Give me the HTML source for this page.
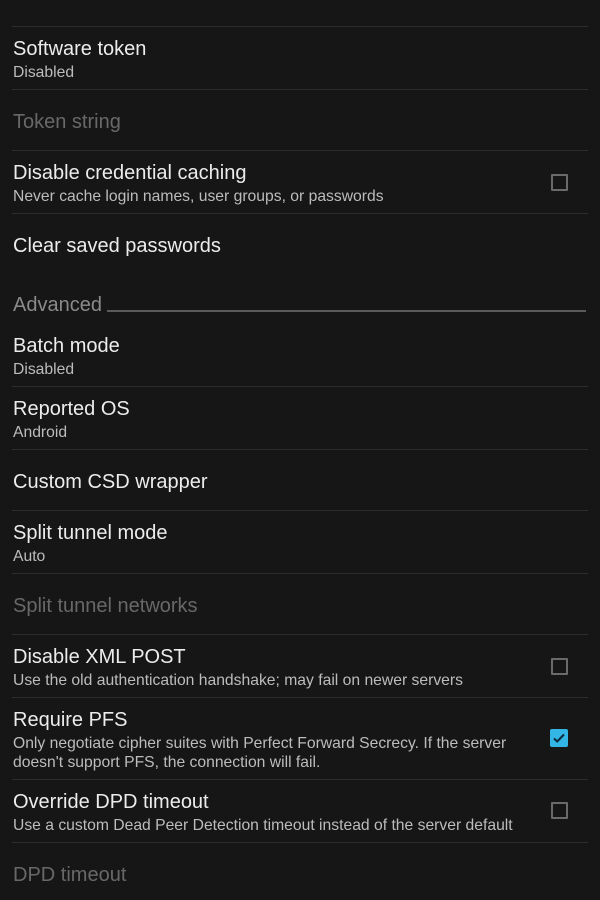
<!DOCTYPE html>
<html><head><meta charset="utf-8"><style>
body{margin:0;width:600px;height:900px;background:#161616;position:relative;overflow:hidden;font-family:"Liberation Sans",sans-serif}
.d{position:absolute;left:12px;width:576px;height:1px;background:#2c2c2c}
.t{position:absolute;left:13px;font-size:20px;color:#ececec;line-height:1;white-space:nowrap}
.s{position:absolute;left:13px;font-size:15.7px;color:#bcbcbc;line-height:1;white-space:nowrap}
.g{color:#686868}
.cb{position:absolute;left:551px;width:13px;height:13px;border:2px solid #6a6a6a;border-radius:1px}
.ck{position:absolute;left:550px;width:18px;height:18px;background:#33b5e5;border-radius:2px}
</style></head><body>
<div class="d" style="top:26px"></div>
<div class="t" style="top:39px">Software token</div>
<div class="s" style="top:65px">Disabled</div>
<div class="d" style="top:89px"></div>
<div class="t g" style="top:112px">Token string</div>
<div class="d" style="top:150px"></div>
<div class="t" style="top:163px">Disable credential caching</div>
<div class="s" style="top:189px">Never cache login names, user groups, or passwords</div>
<div class="cb" style="top:174px"></div>
<div class="d" style="top:213px"></div>
<div class="t" style="top:236px">Clear saved passwords</div>
<div class="t" style="top:295px;color:#8a8a8a">Advanced</div>
<div style="position:absolute;left:107px;top:310px;width:479px;height:2px;background:#5a5a5a"></div>
<div class="t" style="top:336px">Batch mode</div>
<div class="s" style="top:362px">Disabled</div>
<div class="d" style="top:386px"></div>
<div class="t" style="top:399px">Reported OS</div>
<div class="s" style="top:425px">Android</div>
<div class="d" style="top:449px"></div>
<div class="t" style="top:472px">Custom CSD wrapper</div>
<div class="d" style="top:510px"></div>
<div class="t" style="top:523px">Split tunnel mode</div>
<div class="s" style="top:549px">Auto</div>
<div class="d" style="top:573px"></div>
<div class="t g" style="top:596px">Split tunnel networks</div>
<div class="d" style="top:634px"></div>
<div class="t" style="top:647px">Disable XML POST</div>
<div class="s" style="top:673px">Use the old authentication handshake; may fail on newer servers</div>
<div class="cb" style="top:658px"></div>
<div class="d" style="top:697px"></div>
<div class="t" style="top:710px">Require PFS</div>
<div class="s" style="top:736px">Only negotiate cipher suites with Perfect Forward Secrecy. If the server</div>
<div class="s" style="top:755px">doesn't support PFS, the connection will fail.</div>
<div class="ck" style="top:729px"><svg width="18" height="18" viewBox="0 0 18 18"><path d="M4 9.5l3.2 3L14 5.5" stroke="#0d2a3a" stroke-width="2" fill="none"/></svg></div>
<div class="d" style="top:779px"></div>
<div class="t" style="top:792px">Override DPD timeout</div>
<div class="s" style="top:818px">Use a custom Dead Peer Detection timeout instead of the server default</div>
<div class="cb" style="top:802px"></div>
<div class="d" style="top:842px"></div>
<div class="t g" style="top:865px">DPD timeout</div>
</body></html>
